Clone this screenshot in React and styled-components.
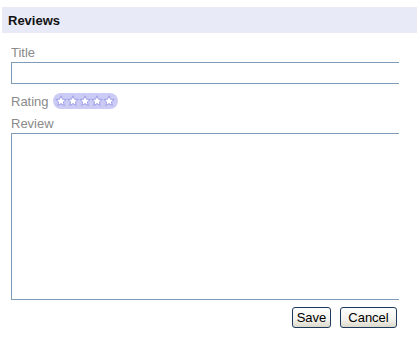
import React from "react"
import styled, { createGlobalStyle } from "styled-components"

const GlobalStyle = createGlobalStyle`
  html, body {
    margin: 0;
    padding: 0;
    background: #ffffff;
    font-family: "Liberation Sans", Arial, sans-serif;
  }
`

const Page = styled.div`
  width: 417px;
  padding-top: 7px;
`

const Header = styled.div`
  height: 26px;
  margin-left: 2px;
  padding-left: 6px;
  background: #e8eaf7;
  display: flex;
  align-items: center;
  font-size: 13px;
  font-weight: bold;
  color: #111;
`

const Form = styled.div`
  width: 388px;
  margin-left: 11px;
  overflow: hidden;
  display: flex;
  flex-direction: column;
`

const Label = styled.div`
  font-size: 13px;
  line-height: 15px;
  color: #8a8a8a;
  margin-top: ${(p) => p.$top || 0}px;
  margin-bottom: 2px;
`

const TextInput = styled.div`
  width: 400px;
  height: ${(p) => p.$height}px;
  border: 1px solid #7f9db9;
  box-sizing: border-box;
  background: #fff;
`

const RatingRow = styled.div`
  display: flex;
  align-items: center;
  gap: 4px;
  margin-top: 8px;
  height: 18px;
`

const RatingLabel = styled.span`
  font-size: 13px;
  color: #8a8a8a;
`

const StarPill = styled.div`
  width: 65px;
  height: 16px;
  border-radius: 8px;
  background: #cbcbf6;
  display: flex;
  align-items: center;
  justify-content: center;
`

const Actions = styled.div`
  display: flex;
  justify-content: flex-end;
  gap: 9px;
  width: 386px;
  margin-left: 11px;
  margin-top: 7px;
`

const Button = styled.button`
  height: 21px;
  width: ${(p) => p.$width}px;
  padding: 0;
  border: 1px solid #1f3b5c;
  border-radius: 3px;
  background: linear-gradient(#ffffff, #f3f2ec 60%, #dcd9cb);
  font-family: "Liberation Sans", Arial, sans-serif;
  font-size: 13px;
  color: #000;
`

const Star = () => (
  <svg width="12" height="12" viewBox="0 0 12 12">
    <path
      d="M6 0.8 L7.5 4.2 L11.2 4.5 L8.4 6.9 L9.3 10.6 L6 8.6 L2.7 10.6 L3.6 6.9 L0.8 4.5 L4.5 4.2 Z"
      fill="#ffffff"
      stroke="#9d9de6"
      strokeWidth="1"
      strokeLinejoin="round"
    />
  </svg>
)

export default function App() {
  return (
    <>
      <GlobalStyle />
      <Page>
        <Header>Reviews</Header>
        <Form>
          <Label $top={12}>Title</Label>
          <TextInput $height={22} />
          <RatingRow>
            <RatingLabel>Rating</RatingLabel>
            <StarPill>
              {[0, 1, 2, 3, 4].map((i) => (
                <Star key={i} />
              ))}
            </StarPill>
          </RatingRow>
          <Label $top={6}>Review</Label>
          <TextInput $height={167} />
        </Form>
        <Actions>
          <Button $width={39}>Save</Button>
          <Button $width={57}>Cancel</Button>
        </Actions>
      </Page>
    </>
  )
}
